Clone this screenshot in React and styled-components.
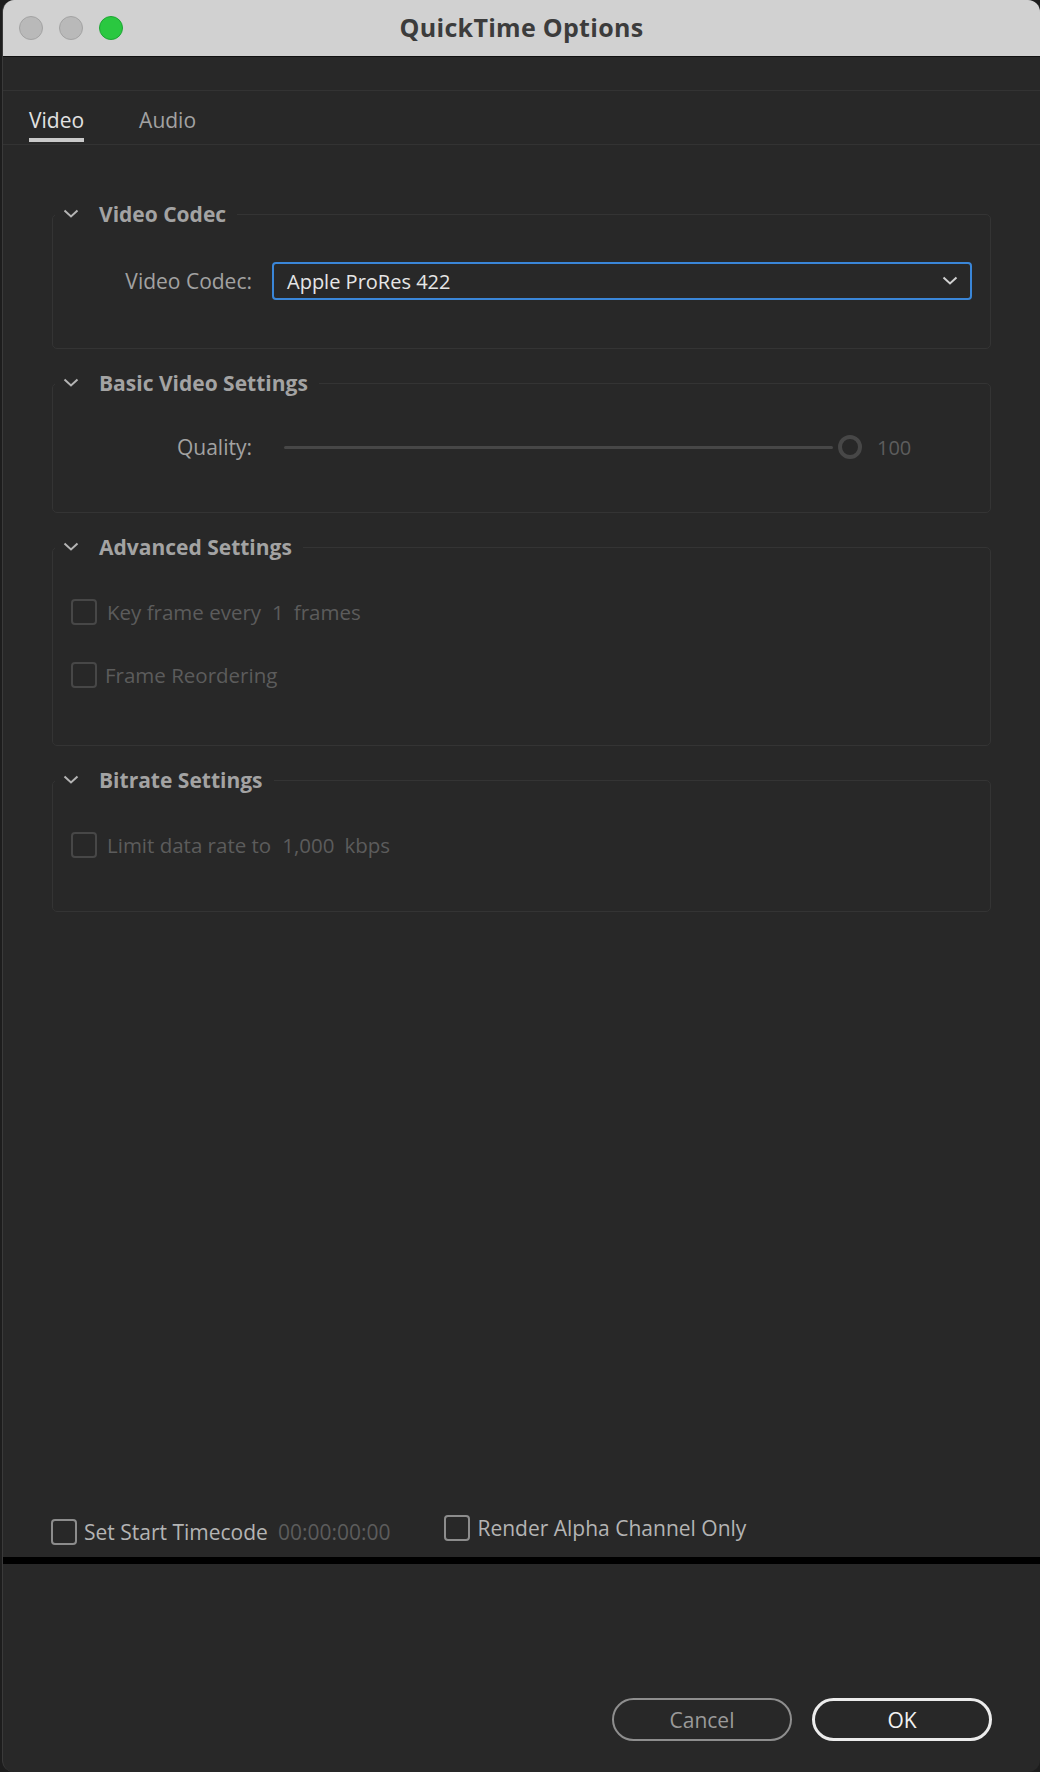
import React, { useState } from 'react';
import styled, { createGlobalStyle } from 'styled-components';

const GlobalStyle = createGlobalStyle`
  html, body {
    margin: 0;
    padding: 0;
    background: #1d1d1d;
  }
  body {
    font-family: "Open Sans", "Liberation Sans", sans-serif;
  }
  * {
    box-sizing: border-box;
  }
`;

const Window = styled.div`
  margin-left: 2px;
  width: 1038px;
  height: 1772px;
  display: flex;
  flex-direction: column;
  background: #282828;
  border-left: 1px solid #3a3a3a;
  border-radius: 12px;
  overflow: hidden;
`;

const TitleBar = styled.div`
  height: 57px;
  flex-shrink: 0;
  display: grid;
  grid-template-columns: 1fr auto 1fr;
  align-items: center;
  background: #d1d1d1;
  border-bottom: 1px solid #111;
`;

const Lights = styled.div`
  display: flex;
  gap: 16px;
  padding-left: 16px;
`;

const Light = styled.span`
  width: 24px;
  height: 24px;
  border-radius: 50%;
  background: ${(p) => (p.$on ? '#2ac840' : '#b9b9b9')};
  border: 1px solid ${(p) => (p.$on ? '#1ea534' : '#a3a3a3')};
`;

const Title = styled.h1`
  margin: 0 0 2px;
  font-size: 25px;
  font-weight: 700;
  color: #3c3c3c;
  letter-spacing: 0.3px;
`;

const TopGap = styled.div`
  height: 34px;
  flex-shrink: 0;
  border-bottom: 1px solid #333;
`;

const TabBar = styled.div`
  height: 54px;
  flex-shrink: 0;
  display: flex;
  align-items: flex-start;
  gap: 55px;
  padding-left: 26px;
  border-bottom: 1px solid #333;
`;

const Tab = styled.div`
  padding: 15px 0 4px;
  line-height: 28px;
  font-size: 21px;
  color: ${(p) => (p.$active ? '#e2e2e2' : '#a2a2a2')};
  border-bottom: 4px solid ${(p) => (p.$active ? '#c9c9c9' : 'transparent')};
  cursor: pointer;
`;

const Content = styled.div`
  flex: 1;
  display: flex;
  flex-direction: column;
  gap: 20px;
  padding: 55px 49px 0 49px;
`;

const Group = styled.fieldset`
  margin: 0;
  padding: ${(p) => p.$pad};
  padding-left: 0;
  border: 1px solid #343434;
  border-radius: 5px;
  min-width: 0;
`;

const Legend = styled.legend`
  display: flex;
  align-items: center;
  gap: 20px;
  margin-left: 2px;
  padding: 0 11px 0 8px;
  line-height: 28px;
  font-size: 21px;
  font-weight: 700;
  color: #a3a3a3;
`;

const GroupBody = styled.div`
  padding-left: ${(p) => p.$indent || '0'};
`;

const FieldRow = styled.div`
  display: flex;
  align-items: center;
  gap: 20px;
`;

const FieldLabel = styled.span`
  width: 199px;
  text-align: right;
  font-size: 21px;
  color: #a2a2a2;
`;

const Select = styled.div`
  flex: 1;
  height: 38px;
  display: flex;
  align-items: center;
  justify-content: space-between;
  padding: 0 12px 0 13px;
  border: 2px solid #3a86d8;
  border-radius: 4px;
  font-size: 20px;
  color: #e6e6e6;
`;

const Slider = styled.div`
  flex: 1;
  display: flex;
  align-items: center;
  padding-left: 12px;
`;

const Track = styled.div`
  width: 549px;
  height: 3px;
  background: #474747;
  border-radius: 2px;
`;

const Thumb = styled.span`
  margin-left: 5px;
  width: 24px;
  height: 24px;
  border-radius: 50%;
  border: 4px solid #474747;
  background: #282828;
`;

const SliderValue = styled.span`
  margin-left: 15px;
  font-size: 20px;
  color: #5d5d5d;
`;

const CheckStack = styled.div`
  display: flex;
  flex-direction: column;
  gap: 35px;
`;

const CheckRow = styled.label`
  display: flex;
  align-items: center;
  gap: ${(p) => p.$gap || '10px'};
  font-size: ${(p) => (p.$dim ? '20.5px' : '21px')};
  line-height: 28px;
  color: ${(p) => (p.$dim ? '#5c5c5c' : '#b4b4b4')};
`;

const Box = styled.span`
  width: 26px;
  height: 26px;
  flex-shrink: 0;
  border: 2px solid ${(p) => (p.$dim ? '#474747' : '#8c8c8c')};
  border-radius: 4px;
  background: ${(p) => (p.$checked ? '#8c8c8c' : 'transparent')};
`;

const Value = styled.span`
  margin-left: ${(p) => p.$ml || '0'};
  color: #5c5c5c;
`;

const OptionsRow = styled.div`
  flex-shrink: 0;
  display: flex;
  align-items: flex-start;
  gap: 54px;
  padding: 0 0 11px 48px;
`;

const OptionGroup = styled.div`
  display: flex;
  align-items: center;
  padding-top: ${(p) => p.$offset || '0'};
`;

const Divider = styled.div`
  height: 7px;
  flex-shrink: 0;
  background: #000;
`;

const Footer = styled.div`
  height: 208px;
  flex-shrink: 0;
  display: flex;
  justify-content: flex-end;
  align-items: flex-start;
  gap: 20px;
  padding: 134px 48px 0 0;
`;

const Button = styled.button`
  width: 180px;
  height: 43px;
  border-radius: 22px;
  background: transparent;
  font-family: inherit;
  font-size: 21px;
  cursor: pointer;
  border: ${(p) => (p.$primary ? '3px solid #ececec' : '2px solid #8e8e8e')};
  color: ${(p) => (p.$primary ? '#f2f2f2' : '#9a9a9a')};
`;

const Chevron = ({ color = '#b4b4b4' }) => (
  <svg width="16" height="10" viewBox="0 0 16 10">
    <polyline points="1.5,1.5 8,7.5 14.5,1.5" fill="none" stroke={color} strokeWidth="2" />
  </svg>
);

const Section = ({ title, pad, indent, children }) => (
  <Group $pad={pad}>
    <Legend>
      <Chevron />
      {title}
    </Legend>
    <GroupBody $indent={indent}>{children}</GroupBody>
  </Group>
);

const App = () => {
  const [tab, setTab] = useState('video');

  return (
    <>
      <GlobalStyle />
      <Window>
        <TitleBar>
          <Lights>
            <Light />
            <Light />
            <Light $on />
          </Lights>
          <Title>QuickTime Options</Title>
          <div />
        </TitleBar>
        <TopGap />
        <TabBar>
          <Tab $active={tab === 'video'} onClick={() => setTab('video')}>Video</Tab>
          <Tab $active={tab === 'audio'} onClick={() => setTab('audio')}>Audio</Tab>
        </TabBar>

        <Content>
          <Section title="Video Codec" pad="34px 18px 48px">
            <FieldRow>
              <FieldLabel>Video Codec:</FieldLabel>
              <Select>
                Apple ProRes 422
                <Chevron color="#d0d0d0" />
              </Select>
            </FieldRow>
          </Section>

          <Section title="Basic Video Settings" pad="36px 18px 51px">
            <FieldRow>
              <FieldLabel>Quality:</FieldLabel>
              <Slider>
                <Track />
                <Thumb />
                <SliderValue>100</SliderValue>
              </Slider>
            </FieldRow>
          </Section>

          <Section title="Advanced Settings" pad="37px 18px 56px" indent="18px">
            <CheckStack>
              <CheckRow $dim>
                <Box $dim />
                Key frame every
                <Value $ml="1px">1</Value>
                frames
              </CheckRow>
              <CheckRow $dim $gap="8px">
                <Box $dim />
                Frame Reordering
              </CheckRow>
            </CheckStack>
          </Section>

          <Section title="Bitrate Settings" pad="37px 18px 52px" indent="18px">
            <CheckRow $dim>
              <Box $dim />
              Limit data rate to
              <Value $ml="1px">1,000</Value>
              kbps
            </CheckRow>
          </Section>
        </Content>

        <OptionsRow>
          <OptionGroup $offset="4px">
            <CheckRow $gap="7px">
              <Box />
              Set Start Timecode
              <Value $ml="3px">00:00:00:00</Value>
            </CheckRow>
          </OptionGroup>
          <OptionGroup>
            <CheckRow $gap="7px">
              <Box />
              Render Alpha Channel Only
            </CheckRow>
          </OptionGroup>
        </OptionsRow>

        <Divider />

        <Footer>
          <Button>Cancel</Button>
          <Button $primary>OK</Button>
        </Footer>
      </Window>
    </>
  );
};

export default App;
